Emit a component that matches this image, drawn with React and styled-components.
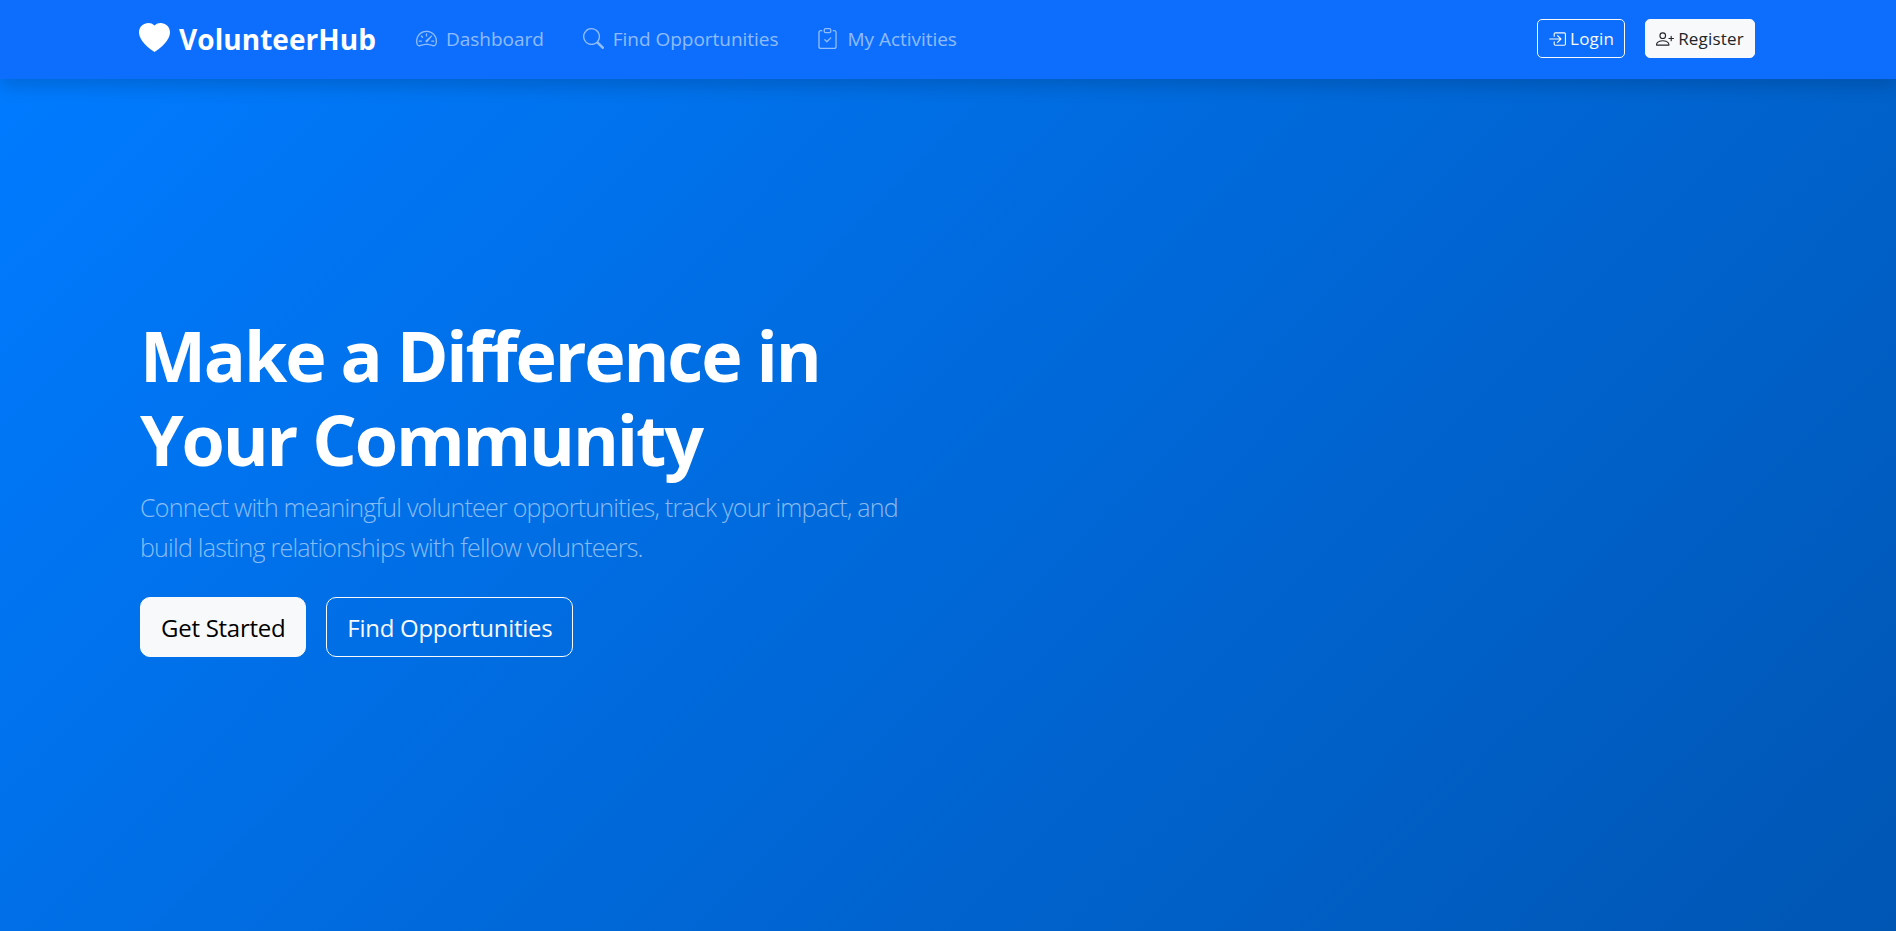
import styled, { createGlobalStyle } from "styled-components";
import {
  BsBoxArrowInRight,
  BsClipboardCheck,
  BsHeartFill,
  BsPersonPlus,
  BsSearch,
  BsSpeedometer2,
} from "react-icons/bs";

const GlobalStyle = createGlobalStyle`
  * {
    box-sizing: border-box;
  }

  html,
  body {
    margin: 0;
    height: 100%;
    overflow: hidden;
  }

  body {
    font-family: "Open Sans", "Noto Sans", "Liberation Sans", sans-serif;
    font-size: 16px;
    color: #212529;
  }
`;

const Page = styled.div`
  height: 931px;
  display: flex;
  flex-direction: column;
`;

const Navbar = styled.nav`
  position: relative;
  z-index: 1;
  height: 79px;
  flex: none;
  padding: 0 141px 2px 139px;
  display: flex;
  align-items: center;
  background: #0d6efd;
  box-shadow: 0 8px 16px rgba(0, 0, 0, 0.15);
`;

const Brand = styled.a`
  display: flex;
  align-items: center;
  gap: 9px;
  margin-right: 40px;
  color: #fff;
  font-size: 28px;
  font-weight: 700;
  letter-spacing: 0.05px;
`;

const Links = styled.div`
  display: flex;
  align-items: center;
  gap: 39px;
  flex: 1;
`;

const NavLink = styled.a`
  display: flex;
  align-items: center;
  gap: 9px;
  color: rgba(255, 255, 255, 0.55);
  font-size: 19px;
  letter-spacing: -0.03px;
`;

const Actions = styled.div`
  display: flex;
  align-items: center;
  gap: 20px;
`;

const SmallButton = styled.a`
  display: flex;
  align-items: center;
  justify-content: center;
  gap: 4px;
  height: 39px;
  padding: 0 10px;
  border-radius: 5px;
  border: 1px solid #f8f9fa;
  background: ${({ $solid }) => ($solid ? "#f8f9fa" : "transparent")};
  color: ${({ $solid }) => ($solid ? "#212529" : "#f8f9fa")};
  font-size: 17px;
  letter-spacing: 0.2px;
`;

const Hero = styled.main`
  flex: 1;
  padding: 0 140px 40px;
  display: flex;
  flex-direction: column;
  justify-content: center;
  background: linear-gradient(135deg, #007bff 0%, #0056b3 100%);
`;

const Title = styled.h1`
  margin: 0 0 6px;
  width: 800px;
  color: #fff;
  font-size: 70px;
  font-weight: 700;
  line-height: 84px;
  letter-spacing: -2.15px;
`;

const Lead = styled.p`
  margin: 0 0 30px;
  width: 800px;
  color: rgba(255, 255, 255, 0.55);
  font-size: 25px;
  font-weight: 300;
  line-height: 40px;
  letter-spacing: -0.76px;
`;

const ButtonRow = styled.div`
  display: flex;
  gap: 20px;
`;

const LargeButton = styled.a`
  display: flex;
  align-items: center;
  height: 60px;
  padding: 0 20px;
  border-radius: 10px;
  border: 1px solid #f8f9fa;
  background: ${({ $solid }) => ($solid ? "#f8f9fa" : "transparent")};
  color: ${({ $solid }) => ($solid ? "#000" : "#f8f9fa")};
  font-size: 24px;
  letter-spacing: -0.27px;
`;

export default function App() {
  return (
    <Page>
      <GlobalStyle />
      <Navbar>
        <Brand>
          <BsHeartFill size={31} />
          VolunteerHub
        </Brand>
        <Links>
          <NavLink>
            <BsSpeedometer2 size={21} />
            Dashboard
          </NavLink>
          <NavLink>
            <BsSearch size={21} />
            Find Opportunities
          </NavLink>
          <NavLink>
            <BsClipboardCheck size={21} />
            My Activities
          </NavLink>
        </Links>
        <Actions>
          <SmallButton>
            <BsBoxArrowInRight size={18} />
            Login
          </SmallButton>
          <SmallButton $solid>
            <BsPersonPlus size={18} />
            Register
          </SmallButton>
        </Actions>
      </Navbar>
      <Hero>
        <Title>Make a Difference in Your Community</Title>
        <Lead>
          Connect with meaningful volunteer opportunities, track your impact, and
          build lasting relationships with fellow volunteers.
        </Lead>
        <ButtonRow>
          <LargeButton $solid>Get Started</LargeButton>
          <LargeButton>Find Opportunities</LargeButton>
        </ButtonRow>
      </Hero>
    </Page>
  );
}
